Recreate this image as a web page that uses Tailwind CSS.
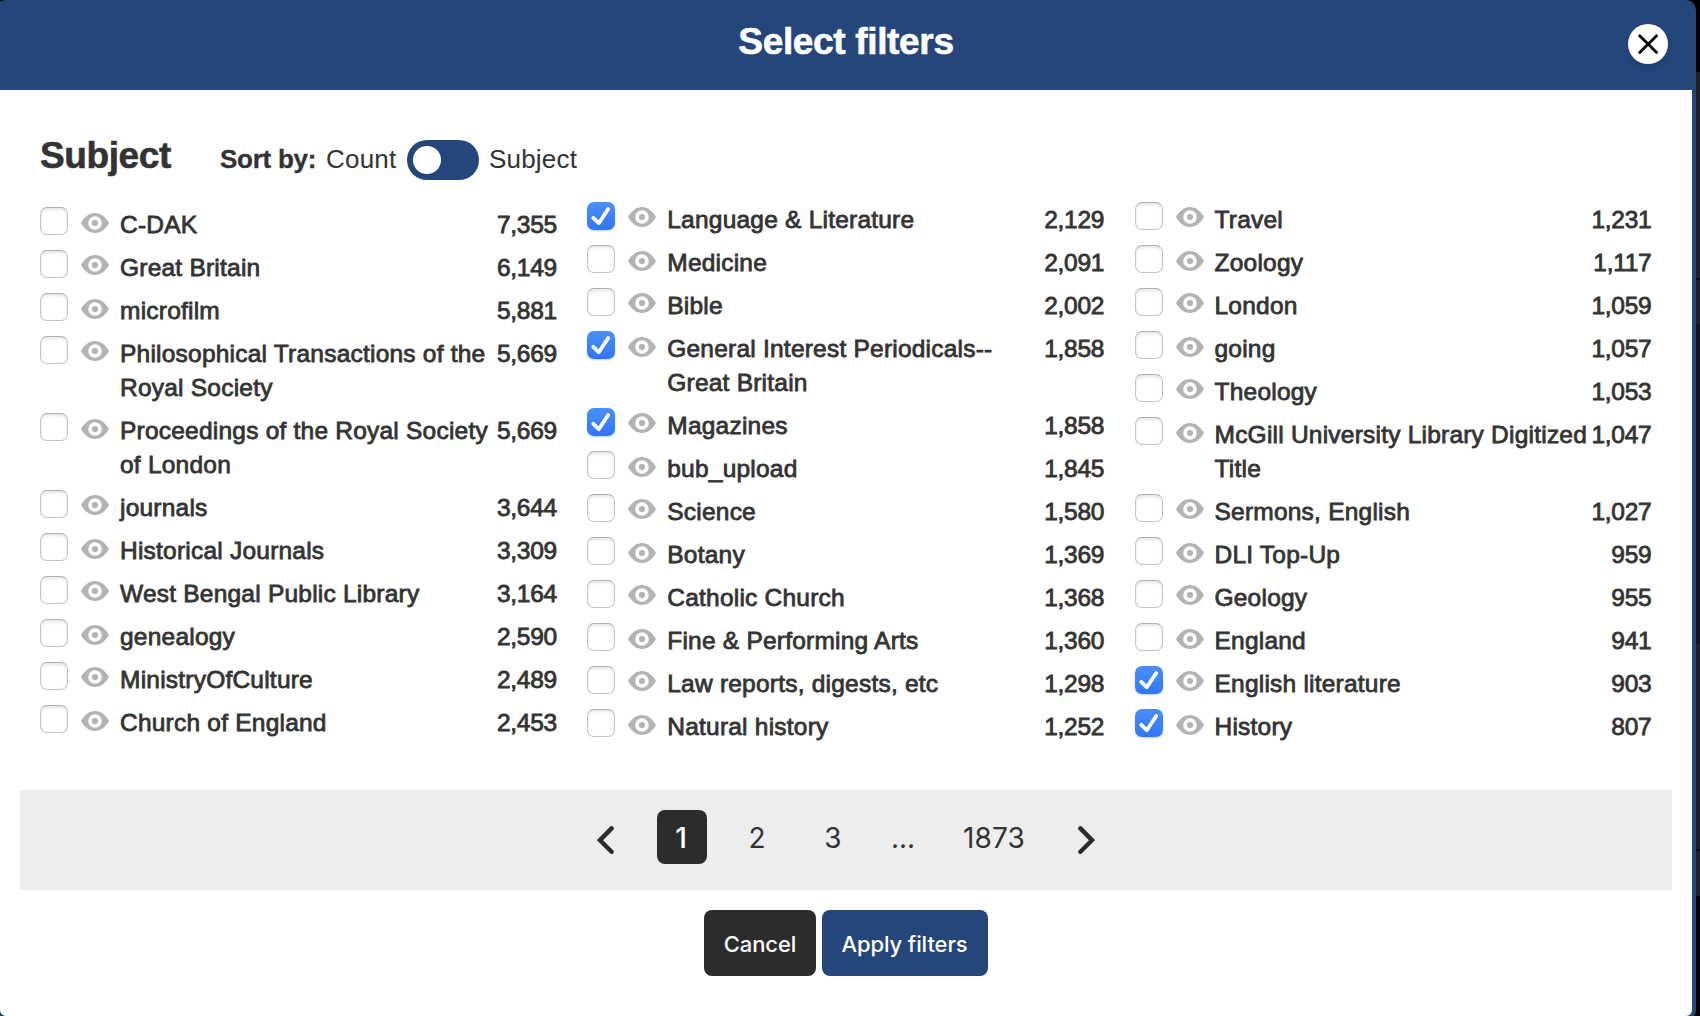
<!DOCTYPE html>
<html lang="en">
<head>
<meta charset="utf-8">
<title>Select filters</title>
<script src="https://cdn.jsdelivr.net/npm/@tailwindcss/browser@4"></script>
</head>
<body class="flex h-[1016px] items-start overflow-hidden bg-black font-['Liberation_Sans',Arial,sans-serif] text-[#333]">
<main class="-ml-1 flex h-[1020px] w-[1700px] shrink-0 flex-col rounded-[10px] border-4 border-[#25467a] bg-white">
  <header class="flex h-[86px] shrink-0 items-center bg-[#25467a] text-white">
    <div class="w-[240px]"></div>
    <h1 class="flex-1 pb-[11px] text-center text-[37px] font-bold leading-none tracking-[-0.34px] [-webkit-text-stroke:0.6px_#fff]">Select filters</h1>
    <div class="flex w-[240px] justify-end pr-[24px] pb-[6px]">
      <button aria-label="Close" class="flex size-10 items-center justify-center rounded-full bg-white shadow-md">
        <svg class="size-10" viewBox="0 0 40 40" fill="none" stroke="#000" stroke-width="2.8" stroke-linecap="round"><path d="M11.7 11.7L28.6 28.6M28.6 11.7L11.7 28.6"/></svg>
      </button>
    </div>
  </header>
  <section class="flex h-[112px] shrink-0 pl-10 whitespace-nowrap">
    <h2 class="mt-[45px] w-[180px] text-[37px] font-bold leading-[42px] tracking-[-0.4px] [-webkit-text-stroke:0.6px_#333]">Subject</h2>
    <div class="mt-[50px] flex h-10 items-center text-[26px] leading-10 tracking-[0.2px]">
      <b class="w-[106px] pb-0.5 tracking-[-0.25px] [-webkit-text-stroke:0.3px_#333]">Sort by:</b>
      <span class="w-[81px] pb-0.5">Count</span>
      <span class="flex h-10 w-[72px] items-center rounded-full bg-[#25467a] pl-1.5"><i class="size-7 rounded-full bg-white"></i></span>
      <span class="ml-2.5 pb-0.5">Subject</span>
    </div>
  </section>
  <section id="columns" class="flex h-[588px] shrink-0 gap-[30.25px] pl-10"></section>
  <nav class="mx-5 flex h-[100px] shrink-0 bg-[#ededed] pl-[577px] pt-5 font-[Inter,sans-serif] text-[28px] leading-[56px]">
    <svg class="mt-4 h-7 w-[17px]" viewBox="0 0 17 28" fill="none" stroke="#2c2c2c" stroke-width="4.4" stroke-linecap="round" stroke-linejoin="miter"><path d="M14.6 2.4L3 14.2L14.6 25.8"/></svg>
    <span class="ml-[43px] h-[54px] w-[50px] rounded-lg bg-[#2c2c2c] pr-0.5 text-center font-medium text-white">1</span>
    <span class="ml-[25px] w-[50px] text-center">2</span>
    <span class="ml-[26px] w-[50px] text-center">3</span>
    <i class="ml-[23px] w-[46px] text-center">...</i>
    <span class="ml-[24px] w-[86px] text-center tracking-[0.2px]">1873</span>
    <svg class="ml-[40.5px] mt-4 h-7 w-[17px]" viewBox="0 0 17 28" fill="none" stroke="#2c2c2c" stroke-width="4.4" stroke-linecap="round" stroke-linejoin="miter"><path d="M2.4 2.4L14 14.2L2.4 25.8"/></svg>
  </nav>
  <footer class="flex justify-center gap-1.5 pt-5 font-[Inter,sans-serif] text-[22px] font-medium leading-[66px] tracking-[-0.1px] text-white">
    <button class="h-[66px] w-[112px] rounded-lg bg-[#2c2c2c] pt-px">Cancel</button>
    <button class="h-[66px] w-[166px] rounded-lg bg-[#25467a] pt-px pr-px">Apply filters</button>
  </footer>
</main>
<aside class="flex w-1 flex-col pt-[72px]">
  <div class="h-[206px] bg-[#202020]"></div>
  <div class="h-[2px] bg-[#0c0c0c]"></div>
  <div class="h-[44px] bg-[#202020]"></div>
  <div class="h-[320px] bg-[#161616]"></div>
  <div class="h-[205px] bg-[#1f1f1f]"></div>
  <div class="h-[2px] bg-[#0c0c0c]"></div>
  <div class="h-[45px] bg-[#222]"></div>
</aside>
<script>
  const columns = [
    [["C-DAK","7,355"],["Great Britain","6,149"],["microfilm","5,881"],["Philosophical Transactions of the|Royal Society","5,669"],["Proceedings of the Royal Society|of London","5,669"],["journals","3,644"],["Historical Journals","3,309"],["West Bengal Public Library","3,164"],["genealogy","2,590"],["MinistryOfCulture","2,489"],["Church of England","2,453"]],
    [["Language & Literature","2,129",1],["Medicine","2,091"],["Bible","2,002"],["General Interest Periodicals--|Great Britain","1,858",1],["Magazines","1,858",1],["bub_upload","1,845"],["Science","1,580"],["Botany","1,369"],["Catholic Church","1,368"],["Fine & Performing Arts","1,360"],["Law reports, digests, etc","1,298"],["Natural history","1,252"]],
    [["Travel","1,231"],["Zoology","1,117"],["London","1,059"],["going","1,057"],["Theology","1,053"],["McGill University Library Digitized|Title","1,047"],["Sermons, English","1,027"],["DLI Top-Up","959"],["Geology","955"],["England","941"],["English literature","903",1],["History","807",1]]
  ];
  const off = '<span class="size-7 shrink-0 rounded-[7px] border border-[#c4c4c4] border-t-[#b0b0b0] bg-white shadow-[inset_0_2px_3px_rgba(0,0,0,0.1)]"></span>';
  const on = '<span class="size-7 shrink-0 rounded-[7px] bg-linear-to-b from-[#4a8ff9] to-[#3275f6] shadow-[0_1px_2px_rgba(50,117,246,0.35)]"><svg class="size-7" viewBox="0 0 28 28" fill="none" stroke="#fff" stroke-width="3.8" stroke-linecap="round" stroke-linejoin="round"><path d="M6.3 15.8L11.8 21.2L21.2 7"/></svg></span>';
  const eye = pad => `<svg class="ml-[13px] ${pad} h-5 w-7 shrink-0" viewBox="0 0 28 20"><path fill="#b3b3b3" fill-rule="evenodd" d="M0 10C3.4 4 8.2 0 14 0S24.6 4 28 10C24.6 16 19.8 20 14 20S3.4 16 0 10ZM14 3.2A6.8 6.8 0 1 0 14 16.8A6.8 6.8 0 1 0 14 3.2Z"/><circle cx="14" cy="10" r="3.1" fill="#b3b3b3"/></svg>`;
  const esc = s => s.replace(/&/g, '&amp;').replace('|', '<br>');
  document.getElementById('columns').innerHTML = columns.map((rows, c) =>
    `<ul class="w-[517px] shrink-0 ${c ? '' : 'pt-[5px]'}">` + rows.map(([name, count, checked], i) =>
      `<li class="flex pb-[8px]">${checked ? on : off}${eye((i + (c ? 1 : 0)) % 2 ? 'mt-[5px]' : 'mt-[6px]')}
        <span class="ml-[11px] mt-px w-0 flex-1 whitespace-nowrap text-[24.5px] leading-[34px] tracking-[0.22px] [-webkit-text-stroke:0.8px_#333]">${esc(name)}</span>
        <span class="mt-px text-right text-[24.5px] leading-[34px] tracking-[-0.25px] [-webkit-text-stroke:0.8px_#333]">${count}</span></li>`).join('') + '</ul>').join('');
</script>
</body>
</html>
